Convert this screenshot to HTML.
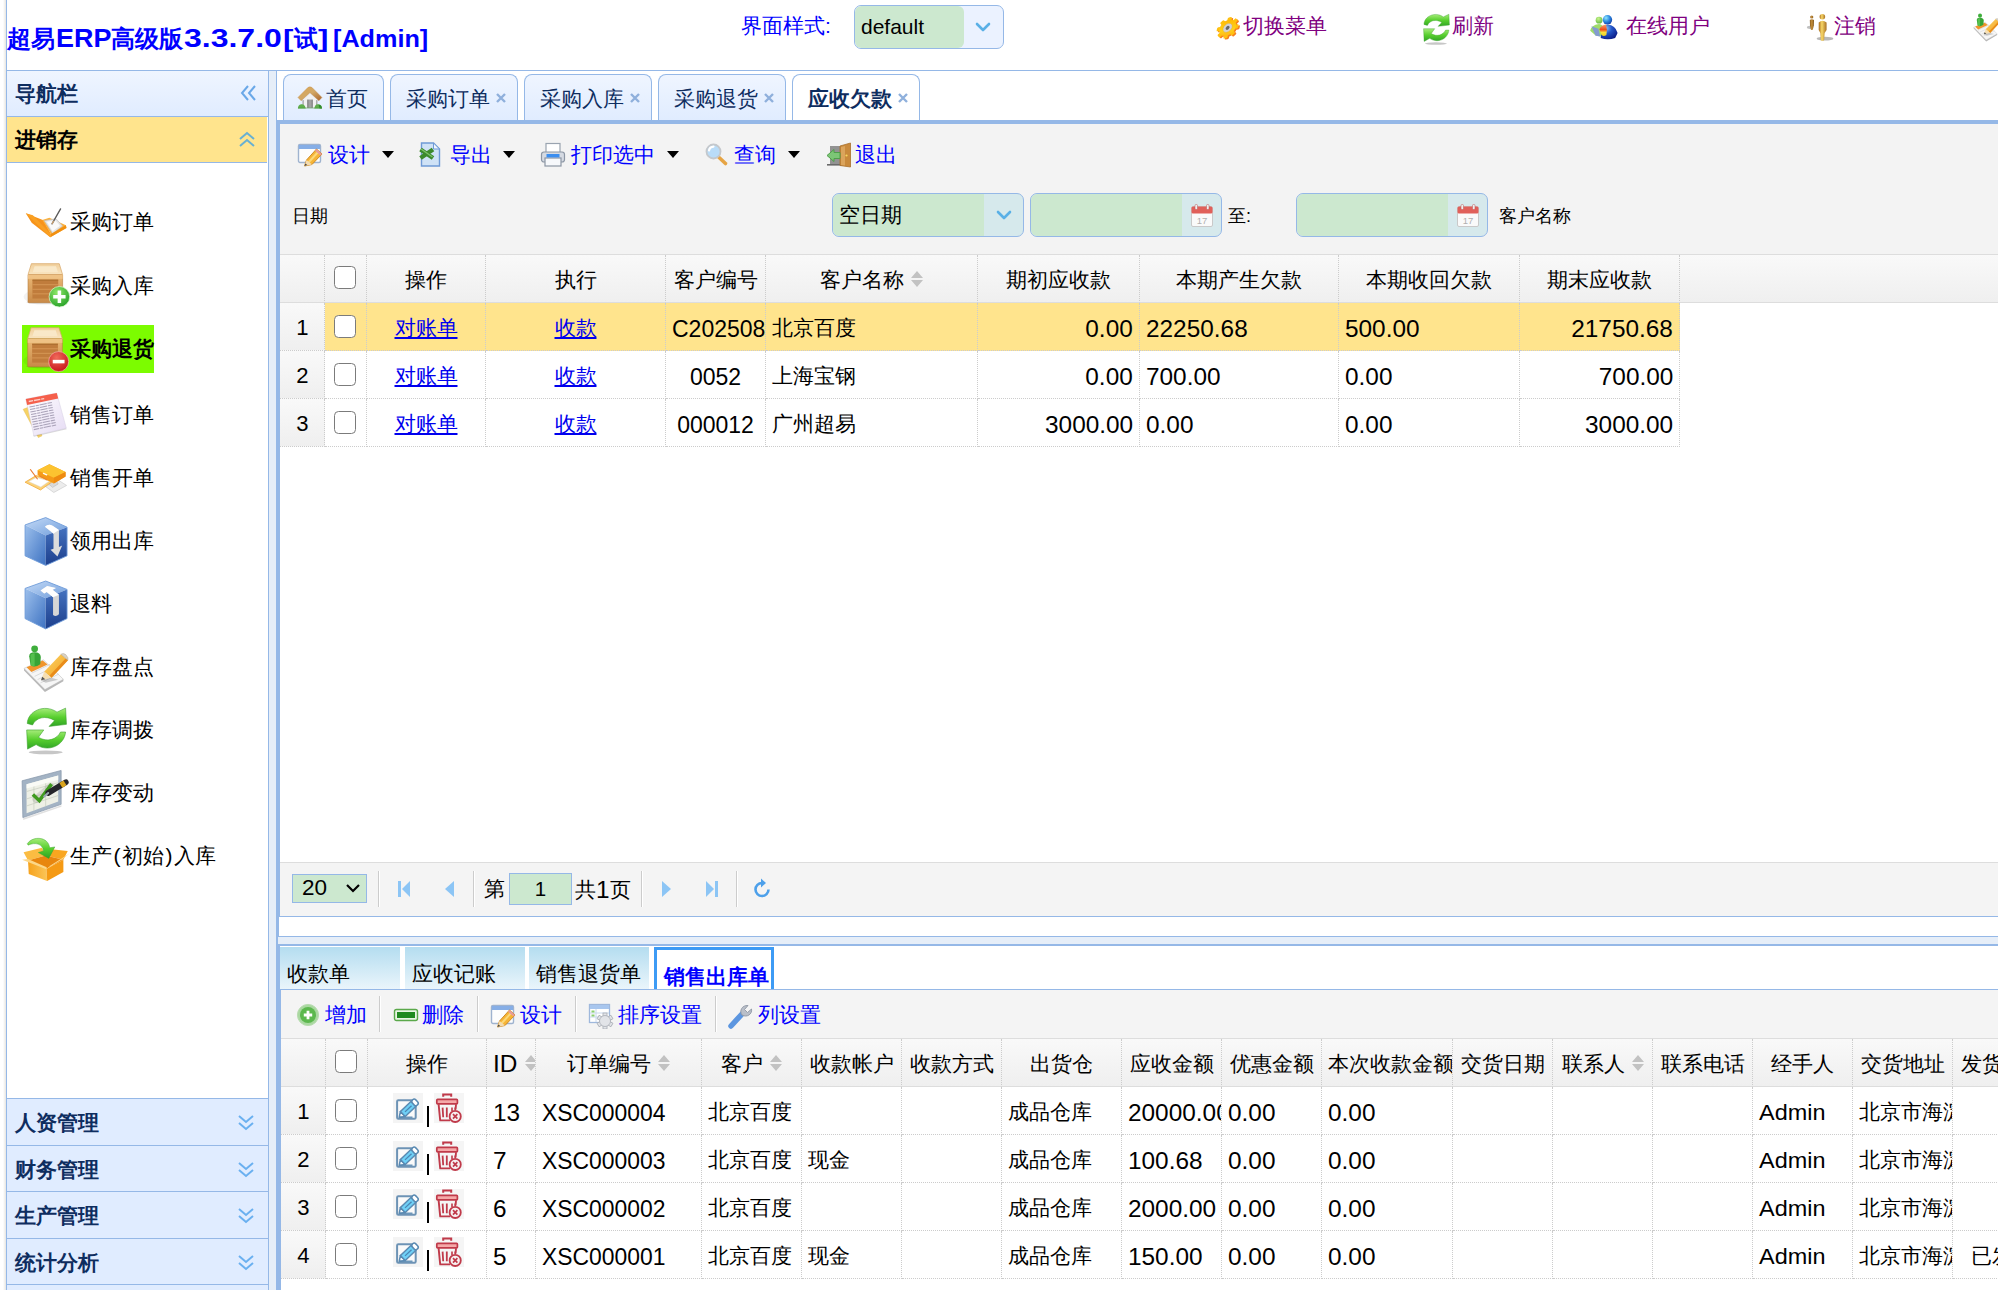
<!DOCTYPE html>
<html lang="zh">
<head>
<meta charset="utf-8">
<title>超易ERP</title>
<style>
html,body{margin:0;padding:0;width:1998px;height:1290px;overflow:hidden;}
#root{position:absolute;left:0;top:0;width:1998px;height:1290px;overflow:hidden;background:#fff;}
body{width:1998px;height:1290px;overflow:hidden;background:#fff;position:relative;
 font-family:"Liberation Sans",sans-serif;font-size:21px;color:#000;line-height:1;}
*{box-sizing:border-box;}
.abs{position:absolute;}
svg{display:block;}
/* ---------- top bar ---------- */
#vline{left:6px;top:0;width:1px;height:70px;background:#95b8e7;}
#vshade{left:3px;top:0;width:3px;height:1290px;background:linear-gradient(90deg,#fff,#e7e5e1);}
#hline{left:6px;top:70px;width:1992px;height:1px;background:#95b8e7;}
#title{left:7px;top:24px;font-size:24px;font-weight:bold;color:#0000ff;white-space:nowrap;line-height:28px;}
.toplbl{top:15px;color:#0000ff;font-size:21px;line-height:24px;white-space:nowrap;}
.toplink{top:15px;color:#800080;font-size:21px;line-height:24px;white-space:nowrap;}
#skin{left:854px;top:5px;width:150px;height:44px;border:1px solid #95b8e7;border-radius:7px;background:#ebf2ff;overflow:hidden;}
#skin .in{position:absolute;left:0;top:0;width:109px;height:42px;background:#cce8cf;border-radius:6px;padding:8px 0 0 6px;font-size:21px;line-height:26px;}
/* ---------- sidebar ---------- */
#side{left:6px;top:70px;width:263px;height:1220px;border:1px solid #95b8e7;background:#fff;border-bottom:none;}
.ph{position:absolute;left:0;width:261px;border-bottom:1px solid #95b8e7;background:#e0ecff;font-weight:bold;color:#0e2d5f;font-size:21px;}
.ph span{position:absolute;left:8px;top:10px;line-height:26px;}
.ph svg{position:absolute;}
#ph0{top:0;height:46px;background:linear-gradient(#eff5ff,#e0ecff);}
#ph1{top:46px;height:46px;background:#ffe48d;color:#000;width:260px;}
.mi{position:absolute;left:63px;font-size:21px;line-height:26px;white-space:nowrap;}
.ic{position:absolute;left:16px;width:46px;height:46px;}
#split{left:269px;top:71px;width:7px;height:1219px;background:#e6eef8;}
#lbar{left:276px;top:120px;width:4px;height:1170px;background:#95b8e7;}
/* ---------- tabs ---------- */
.tab{position:absolute;top:74px;height:47px;border:1px solid #95b8e7;border-bottom:none;border-radius:8px 8px 0 0;
 background:linear-gradient(#eff5ff,#e0ecff);font-size:21px;color:#0e2d5f;white-space:nowrap;}
.tab span{position:absolute;top:11px;line-height:26px;}
.tab .x{position:absolute;top:17px;width:12px;height:12px;}
.tab.sel{background:#fff;font-weight:bold;}
#tabline{left:277px;top:120px;width:1721px;height:4px;background:#95b8e7;}
#tbarea{left:280px;top:124px;width:1718px;height:131px;background:#f3f3f3;}
.tb{position:absolute;color:#0000ff;font-size:21px;line-height:26px;white-space:nowrap;}
.tbi{position:absolute;width:26px;height:26px;}
.dd{position:absolute;width:0;height:0;border-left:6px solid transparent;border-right:6px solid transparent;border-top:7px solid #000;}
.lbl{position:absolute;font-size:18px;line-height:22px;white-space:nowrap;}
.cb{position:absolute;height:44px;border:1px solid #95b8e7;border-radius:7px;background:#d6e9ec;overflow:hidden;}
.cb .in{position:absolute;left:0;top:0;height:42px;background:#cce8cf;border-radius:6px 0 0 6px;padding:8px 0 0 6px;font-size:21px;line-height:26px;}
/* ---------- grids ---------- */
table.g{position:absolute;border-collapse:separate;border-spacing:0;table-layout:fixed;font-size:21px;}
table.g td{height:48px;padding:3px 6px 0 6px;border-right:1px dotted #ccc;border-bottom:1px dotted #ccc;white-space:nowrap;overflow:hidden;vertical-align:middle;line-height:26px;}
table.g tr.h td{background:linear-gradient(#f9f9f9,#efefef);border-bottom:1px solid #ddd;text-align:center;height:48px;padding-top:2px;}
table.g td.rn{background:linear-gradient(#f9f9f9,#efefef);text-align:center;padding:0;}
table.g tr.h td.rn{background:linear-gradient(#f9f9f9,#efefef);}
table.g td.c{text-align:center;}
table.g td.r{text-align:right;}
table.g tr.s td{background:#ffe48d;}
table.g tr.s td.rn{background:linear-gradient(#f9f9f9,#efefef);}
table.g a{color:#0000ee;text-decoration:underline;}
.ck{display:inline-block;width:22px;height:23px;border:1.8px solid #7b7b7b;border-radius:4.5px;background:#fff;vertical-align:middle;position:relative;top:-3px;left:-1px;}
.n{display:inline-block;font-size:23px;transform:translateY(1px) scaleX(1.06);transform-origin:0 50%;}
td.r .n{transform-origin:100% 50%;}
td.c .n,td.rn .n,.cn .n{transform-origin:50% 50%;}
.f{font-size:20.5px;}
.srt{display:inline-block;width:12px;height:16px;vertical-align:0px;margin-left:7px;}
.hfill{position:absolute;background:linear-gradient(#f9f9f9,#efefef);border-bottom:1px solid #ddd;}
/* ---------- pager ---------- */
#pager{left:280px;top:862px;width:1718px;height:54px;background:#f4f4f4;border-top:1px solid #ddd;}
.psep{position:absolute;top:8px;width:2px;height:36px;border-left:1px solid #ccc;border-right:1px solid #fff;}
/* ---------- bottom panel ---------- */
.t2{position:absolute;top:947px;height:42px;width:120px;background:linear-gradient(#b4ddf0,#eaf5fb);font-size:21px;}
.t2 span{position:absolute;left:8px;top:14px;line-height:26px;white-space:nowrap;}
.ops{display:inline-block;white-space:nowrap;height:34px;vertical-align:middle;position:relative;top:-2px;left:1px;}
.ops svg{display:inline-block;vertical-align:top;}
.ops i{display:inline-block;width:2px;height:21px;background:#000;margin:13px 5px 0 4px;vertical-align:top;}
#title span{display:inline-block;vertical-align:baseline;height:28px;line-height:28px;}
#title span b{display:inline-block;transform-origin:0 50%;font-weight:bold;}
.n.a{transform:translateY(1px) scaleX(0.995);}
.n.b{transform:translateY(1px) scaleX(1.0);}
.n.d{font-size:21.5px;transform:translateY(0.5px) scaleX(1.09);}
.pp{display:inline-block;margin:0 1.5px;}
#lbar0{left:276px;top:71px;width:1px;height:50px;background:#95b8e7;}
#lbar2{left:280px;top:990px;width:1px;height:300px;background:#95b8e7;}
td.rn .n{font-size:22.5px;transform:translateY(1px) scaleX(0.98);}

</style>
</head>
<body>
<div id="root">
<div id="vshade" class="abs"></div><div id="vline" class="abs"></div><div id="hline" class="abs"></div>
<div id="title" class="abs">超易<span style="width:56px;font-size:26px"><b style="transform:scaleX(1.035);margin-left:1px">ERP</b></span>高级版<span style="width:98px;font-size:26px"><b style="transform:scaleX(1.23);margin-left:1px">3.3.7.0</b></span><span style="width:13px"><b style="transform:scaleX(1.3);margin-left:2px">[</b></span>试<span style="width:13px"><b style="transform:scaleX(1.3);margin-left:0px">]</b></span><span style="width:99px;font-size:24px"><b style="transform:scaleX(1.05);margin-left:2px">[Admin]</b></span></div>
<div class="abs toplbl" style="left:741px;top:14px;">界面样式:</div>
<div id="skin" class="abs"><div class="in">default</div><div class="abs " style="left:120px;top:13px;"><svg width="16" height="16" viewBox="0 0 16 16"><path d="M2 5 L8 11 L14 5" fill="none" stroke="#5ab0e6" stroke-width="2.6" stroke-linecap="round" stroke-linejoin="round"/></svg></div></div>
<div class="abs " style="left:1205px;top:5px;"><svg width="45" height="45" viewBox="0 0 1290 1290"><defs><linearGradient id="gg" x1="0" y1="0" x2="1" y2="1"><stop offset="0" stop-color="#ffb000"/><stop offset=".6" stop-color="#ffd21a"/><stop offset="1" stop-color="#ffa51a"/></linearGradient></defs><g transform="translate(648 655) rotate(47) scale(.64 .93)"><g transform="translate(75 -10)"><rect x="-75.0" y="-390" width="150" height="150" rx="40" fill="#f77f1e" transform="rotate(0)"/><rect x="-75.0" y="-390" width="150" height="150" rx="40" fill="#f77f1e" transform="rotate(45)"/><rect x="-75.0" y="-390" width="150" height="150" rx="40" fill="#f77f1e" transform="rotate(90)"/><rect x="-75.0" y="-390" width="150" height="150" rx="40" fill="#f77f1e" transform="rotate(135)"/><rect x="-75.0" y="-390" width="150" height="150" rx="40" fill="#f77f1e" transform="rotate(180)"/><rect x="-75.0" y="-390" width="150" height="150" rx="40" fill="#f77f1e" transform="rotate(225)"/><rect x="-75.0" y="-390" width="150" height="150" rx="40" fill="#f77f1e" transform="rotate(270)"/><rect x="-75.0" y="-390" width="150" height="150" rx="40" fill="#f77f1e" transform="rotate(315)"/><circle r="300" fill="#f77f1e"/></g><rect x="-75.0" y="-390" width="150" height="150" rx="40" fill="#ffc010" transform="rotate(0)"/><rect x="-75.0" y="-390" width="150" height="150" rx="40" fill="#ffc010" transform="rotate(45)"/><rect x="-75.0" y="-390" width="150" height="150" rx="40" fill="#ffc010" transform="rotate(90)"/><rect x="-75.0" y="-390" width="150" height="150" rx="40" fill="#ffc010" transform="rotate(135)"/><rect x="-75.0" y="-390" width="150" height="150" rx="40" fill="#ffc010" transform="rotate(180)"/><rect x="-75.0" y="-390" width="150" height="150" rx="40" fill="#ffc010" transform="rotate(225)"/><rect x="-75.0" y="-390" width="150" height="150" rx="40" fill="#ffc010" transform="rotate(270)"/><rect x="-75.0" y="-390" width="150" height="150" rx="40" fill="#ffc010" transform="rotate(315)"/><circle r="300" fill="url(#gg)"/><circle r="165" fill="#d2d2d8" stroke="#e8a810" stroke-width="14"/><circle r="70" fill="#666"/></g></svg></div>
<div class="abs toplink" style="left:1243px;top:14px;">切换菜单</div>
<div class="abs " style="left:1423.3px;top:12.5px;"><svg width="27.3" height="32.2" viewBox="80 925 285 330" preserveAspectRatio="none"><ellipse cx="215" cy="1238" rx="115" ry="13" fill="#000" opacity=".22"/><path d="M90 1042 C92 960 205 905 292 965 L350 938 L356 1048 L238 1062 L276 1022 C215 985 150 1000 126 1052 Z" fill="url(#grA)" stroke="#3aa02c" stroke-width="4" stroke-linejoin="round"/><path d="M350 1100 C342 1190 235 1242 150 1185 L92 1216 L86 1086 L202 1086 L166 1136 C225 1172 292 1150 316 1100 Z" fill="url(#grA)" stroke="#3aa02c" stroke-width="4" stroke-linejoin="round"/></svg></div>
<div class="abs toplink" style="left:1452px;top:14px;">刷新</div>
<div class="abs " style="left:1582px;top:5px;"><svg width="45" height="45" viewBox="0 0 1290 1290"><defs><radialGradient id="uB" cx=".35" cy=".3" r=".9"><stop offset="0" stop-color="#8fe8ff"/><stop offset=".45" stop-color="#2a86e0"/><stop offset="1" stop-color="#0a1e8c"/></radialGradient><radialGradient id="uB2" cx=".3" cy=".25" r=".9"><stop offset="0" stop-color="#8ac8f8"/><stop offset=".4" stop-color="#2456c8"/><stop offset="1" stop-color="#06107a"/></radialGradient><radialGradient id="uG" cx=".4" cy=".3" r=".9"><stop offset="0" stop-color="#c8f58a"/><stop offset="1" stop-color="#4aa830"/></radialGradient><linearGradient id="uF" x1="0" y1="0" x2="0" y2="1"><stop offset="0" stop-color="#f4a070"/><stop offset=".45" stop-color="#ee4a18"/><stop offset=".7" stop-color="#f8e040"/><stop offset="1" stop-color="#f0d020"/></linearGradient></defs><circle cx="490" cy="435" r="98" fill="url(#uG)"/><path d="M235 740 Q260 575 490 545 Q600 560 620 700 L560 900 L400 880 Z" fill="#9fdc6a"/><path d="M270 610 L470 680 L520 900 L390 880 Z" fill="#7f8fe0" opacity=".85"/><circle cx="730" cy="425" r="135" fill="url(#uB)"/><path d="M535 945 Q560 590 730 560 Q960 580 1020 800 L950 945 Q740 1025 535 945 Z" fill="url(#uB2)"/><path d="M500 690 Q560 570 690 560 Q730 700 700 860 Q600 920 545 840 Z" fill="url(#uF)"/></svg></div>
<div class="abs toplink" style="left:1626px;top:14px;">在线用户</div>
<div class="abs " style="left:1795px;top:5px;"><svg width="45" height="45" viewBox="0 0 1290 1290"><defs><linearGradient id="gd" x1="0" y1="0" x2="1" y2="0"><stop offset="0" stop-color="#a86a1c"/><stop offset=".4" stop-color="#f8d868"/><stop offset="1" stop-color="#a87024"/></linearGradient><linearGradient id="gd2" x1="0" y1="0" x2="1" y2="0"><stop offset="0" stop-color="#8a5a1c"/><stop offset=".5" stop-color="#c8923c"/><stop offset="1" stop-color="#7a5018"/></linearGradient></defs><ellipse cx="860" cy="965" rx="240" ry="55" fill="#000" opacity=".28"/><ellipse cx="430" cy="640" rx="90" ry="45" fill="#000" opacity=".25"/><circle cx="480" cy="345" r="45" fill="url(#gd2)"/><path d="M425 430 Q480 390 545 430 L540 590 L510 700 Q480 730 455 700 L430 590 Z" fill="url(#gd2)"/><circle cx="785" cy="338" r="80" fill="url(#gd)"/><path d="M680 500 Q785 400 905 500 L905 720 L850 800 L835 1010 Q785 1040 740 1010 L725 800 L680 720 Z" fill="url(#gd)"/></svg></div>
<div class="abs toplink" style="left:1834px;top:14px;">注销</div>
<div class="abs " style="left:1972.5px;top:13.3px;"><svg width="27.7" height="29" viewBox="60 505 315 330" preserveAspectRatio="none"><path d="M68 668 L200 610 L335 742 L210 812 Z" fill="#f6f6f6" stroke="#c2c2c2" stroke-width="4"/><path d="M68 668 L210 812 L335 742 L335 756 L210 828 L68 682 Z" fill="#b8b8b8"/><path d="M120 700 L245 640 M140 722 L265 662 M160 744 L285 684 M180 766 L305 706" stroke="#cfcfcf" stroke-width="5"/><path d="M85 660 L195 615 L228 642 L118 692 Z" fill="#f0952c"/><circle cx="140" cy="535" r="23" fill="#3fae3c"/><path d="M103 585 Q103 558 140 558 Q180 558 182 590 L178 640 Q140 668 112 645 Z" fill="#37a436"/><path d="M112 575 Q125 562 140 565 L140 655 Q122 655 114 645 Z" fill="#55c04e"/><path d="M205 690 L318 572 L366 612 L255 732 Z" fill="url(#pen)"/><path d="M222 672 L335 556" stroke="#fde08a" stroke-width="0"/><path d="M240 718 L352 600 L366 612 L255 732 Z" fill="#e98c1a"/><path d="M318 572 Q335 560 352 575 L366 596 L366 612 Z" fill="#d9d2c4" stroke="#a8a090" stroke-width="3"/><path d="M183 748 L205 690 L255 732 Z" fill="#f6dfb2"/><path d="M183 748 L192 724 L212 741 Z" fill="#555"/><path d="M183 748 L255 732 L300 745 L215 765 Z" fill="#000" opacity=".18"/></svg></div>
<div id="side" class="abs"><div class="ph" id="ph0"><span>导航栏</span><div class="abs " style="left:233px;top:13px;"><svg width="18" height="18" viewBox="0 0 18 18"><path d="M8 2 L2 9 L8 16 M15 2 L9 9 L15 16" fill="none" stroke="#6aa8e8" stroke-width="2"/></svg></div></div><div class="ph" id="ph1"><span>进销存</span><div class="abs " style="left:231px;top:14px;"><svg width="18" height="18" viewBox="0 0 18 18"><path d="M2 8 L9 2 L16 8 M2 15 L9 9 L16 15" fill="none" stroke="#68b0d2" stroke-width="2"/></svg></div></div><div class="abs" style="left:15px;top:254px;width:132px;height:48px;background:#7cfc00"></div><svg class="abs" style="left:7px;top:119px" width="70" height="190" viewBox="0 0 475 1290"><defs><linearGradient id="wdF" x1="0" y1="0" x2="0" y2="1"><stop offset="0" stop-color="#eab876"/><stop offset="1" stop-color="#c98a48"/></linearGradient><linearGradient id="wdT" x1="0" y1="0" x2="0" y2="1"><stop offset="0" stop-color="#f1cf9b"/><stop offset="1" stop-color="#f8e4c0"/></linearGradient><radialGradient id="gP" cx=".4" cy=".3" r=".8"><stop offset="0" stop-color="#8fe868"/><stop offset="1" stop-color="#1c9a22"/></radialGradient><radialGradient id="gM" cx=".4" cy=".3" r=".8"><stop offset="0" stop-color="#f06a5a"/><stop offset="1" stop-color="#c40d14"/></radialGradient><linearGradient id="pap" x1="0" y1="0" x2="1" y2="1"><stop offset="0" stop-color="#ffffff"/><stop offset="1" stop-color="#e6dcf4"/></linearGradient><linearGradient id="cbL" x1="0" y1="0" x2="1" y2="1"><stop offset="0" stop-color="#9dc0ec"/><stop offset="1" stop-color="#3d72c2"/></linearGradient><linearGradient id="cbR" x1="0" y1="0" x2="0" y2="1"><stop offset="0" stop-color="#4472c0"/><stop offset="1" stop-color="#1d3f8c"/></linearGradient><linearGradient id="cbT" x1="0" y1="0" x2="1" y2="1"><stop offset="0" stop-color="#c4daf6"/><stop offset="1" stop-color="#6f9ddc"/></linearGradient><linearGradient id="grA" x1="0" y1="0" x2="0" y2="1"><stop offset="0" stop-color="#a6ec7a"/><stop offset=".5" stop-color="#58cf2e"/><stop offset="1" stop-color="#2fa325"/></linearGradient><linearGradient id="bxL" x1="0" y1="0" x2="1" y2="0"><stop offset="0" stop-color="#f6a21c"/><stop offset="1" stop-color="#fbc558"/></linearGradient><linearGradient id="pen" x1="0" y1="0" x2="1" y2="1"><stop offset="0" stop-color="#fbd468"/><stop offset="1" stop-color="#f3a01c"/></linearGradient></defs><path d="M80 158 L200 205 L250 298 L246 320 L120 222 Z" fill="#f7931a"/><path d="M80 158 L128 172 L250 300 L246 320 Z" fill="#f9a023"/><path d="M192 203 L240 188 L352 240 L356 258 L246 320 L250 298 Z" fill="#fbb03a"/><path d="M205 208 L285 195 L330 245 L262 296 Z" fill="#e4e4e4" stroke="#bdbdbd" stroke-width="4"/><path d="M222 215 L280 205 L312 243 L262 280 Z" fill="#fafafa"/><path d="M246 320 L356 258 L352 240 L250 298 Z" fill="#f18f10"/><path d="M258 230 L316 128" stroke="#5a5a5a" stroke-width="9" stroke-linecap="round"/><path d="M258 230 L270 209" stroke="#c9a070" stroke-width="9"/><g transform="translate(95 500)"><ellipse cx="40" cy="225" rx="70" ry="40" fill="#000" opacity=".05"/><ellipse cx="110" cy="262" rx="120" ry="14" fill="#000" opacity=".12"/><path d="M23 0 L212 0 L235 75 L0 75 Z" fill="url(#wdT)" stroke="#d9a868" stroke-width="5"/><path d="M45 18 L190 18 L203 58 L32 58 Z" fill="#f9e8c8"/><rect x="0" y="75" width="235" height="190" rx="6" fill="url(#wdF)" stroke="#b67c3c" stroke-width="4"/><rect x="0" y="75" width="235" height="28" fill="#efc285"/><rect x="30" y="112" width="175" height="125" fill="#c07c3c"/><path d="M30 143 h175 M30 174 h175 M30 205 h175" stroke="#d89a58" stroke-width="6"/><path d="M30 112 h175" stroke="#a86a2c" stroke-width="8"/><circle cx="213" cy="225" r="70" fill="url(#gP)" stroke="#d8f5cc" stroke-width="5"/><path d="M213 183 V267 M171 225 H255" stroke="#fff" stroke-width="24"/></g><g transform="translate(93 935)"><ellipse cx="40" cy="225" rx="70" ry="40" fill="#000" opacity=".05"/><ellipse cx="110" cy="262" rx="120" ry="14" fill="#000" opacity=".12"/><path d="M23 0 L212 0 L235 75 L0 75 Z" fill="url(#wdT)" stroke="#d9a868" stroke-width="5"/><path d="M45 18 L190 18 L203 58 L32 58 Z" fill="#f9e8c8"/><rect x="0" y="75" width="235" height="190" rx="6" fill="url(#wdF)" stroke="#b67c3c" stroke-width="4"/><rect x="0" y="75" width="235" height="28" fill="#efc285"/><rect x="30" y="112" width="175" height="125" fill="#c07c3c"/><path d="M30 143 h175 M30 174 h175 M30 205 h175" stroke="#d89a58" stroke-width="6"/><path d="M30 112 h175" stroke="#a86a2c" stroke-width="8"/><circle cx="210" cy="230" r="68" fill="url(#gM)" stroke="#f8c0c0" stroke-width="4"/><path d="M170 230 H250" stroke="#fff" stroke-width="24"/></g></svg><svg class="abs" style="left:7px;top:314px" width="70" height="190" viewBox="0 0 475 1290"><path d="M62 165 L100 150 L190 345 L165 357 Z" fill="#f6d264" stroke="#e2b94a" stroke-width="3"/><path d="M135 352 L358 300 L352 290 L130 340 Z" fill="#000" opacity=".15"/><path d="M80 95 L290 55 L355 293 L135 345 Z" fill="url(#pap)" stroke="#d2cadf" stroke-width="3"/><path d="M80 95 L290 55 L300 92 L89 135 Z" fill="#f5604c"/><path d="M100 112 L205 92" stroke="#fbd0c8" stroke-width="9" stroke-dasharray="30 6 44 6"/><path d="M105 150 L283 113" stroke="#a9a2b8" stroke-width="7" stroke-dasharray="38 5 22 4 50 6 30 200"/><path d="M108 167 L286 130" stroke="#a9a2b8" stroke-width="7" stroke-dasharray="38 5 22 4 50 6 30 200"/><path d="M111 184 L289 147" stroke="#a9a2b8" stroke-width="7" stroke-dasharray="38 5 22 4 50 6 30 200"/><path d="M115 201 L293 164" stroke="#a9a2b8" stroke-width="7" stroke-dasharray="38 5 22 4 50 6 30 200"/><path d="M118 218 L296 181" stroke="#a9a2b8" stroke-width="7" stroke-dasharray="38 5 22 4 50 6 30 200"/><path d="M121 235 L299 198" stroke="#a9a2b8" stroke-width="7" stroke-dasharray="38 5 22 4 50 6 30 200"/><path d="M124 252 L302 215" stroke="#a9a2b8" stroke-width="7" stroke-dasharray="38 5 22 4 50 6 30 200"/><path d="M127 269 L305 232" stroke="#a9a2b8" stroke-width="7" stroke-dasharray="38 5 22 4 50 6 30 200"/><path d="M131 286 L309 249" stroke="#a9a2b8" stroke-width="7" stroke-dasharray="38 5 22 4 50 6 30 200"/><path d="M134 303 L312 266" stroke="#a9a2b8" stroke-width="7" stroke-dasharray="38 5 22 4 50 6 30 200"/><path d="M215 690 L300 645 L357 682 L270 730 Z" fill="#ececec" stroke="#c4c4c4" stroke-width="4"/><path d="M235 672 L285 650 L300 672 L262 695 Z" fill="#d9d9d9" stroke="#aaa" stroke-width="3"/><path d="M75 660 L150 615 L268 650 L180 713 Z" fill="#fbd27a" stroke="#f2a52c" stroke-width="5"/><path d="M100 656 L152 628 L240 652 L182 692 Z" fill="#fff" stroke="#d8d8d8" stroke-width="3"/><path d="M160 578 L240 538 L350 590 L350 622 L270 668 L160 612 Z" fill="#f59a18"/><path d="M160 578 L240 538 L350 590 L270 630 Z" fill="#fcc330"/><path d="M270 630 L350 590 L350 622 L270 668 Z" fill="#ee8a10"/><path d="M200 600 L222 610" stroke="#fff" stroke-width="9" stroke-linecap="round"/><path d="M110 572 L160 640" stroke="#ea7a2e" stroke-width="8"/><path d="M172 617 L226 646" stroke="#ea7a2e" stroke-width="7"/><path d="M75 950 L215 900 L360 965 L215 1022 Z" fill="url(#cbT)"/><path d="M75 950 L215 1022 L215 1225 L75 1160 Z" fill="url(#cbL)"/><path d="M215 1022 L360 965 L360 1160 L215 1225 Z" fill="url(#cbR)"/><path d="M75 950 L215 900 L360 965 L360 1160 L215 1225 L75 1160 Z" fill="none" stroke="#6d9ad8" stroke-width="6" stroke-linejoin="round"/><path d="M210 962 Q232 940 262 955 L305 985 L305 1100 L327 1090 L295 1165 L248 1118 L268 1112 L268 1012 Q240 985 210 962 Z" fill="#dcdcdc"/><path d="M210 962 Q232 940 262 955 L305 985 L268 1008 Q240 985 210 962 Z" fill="#ffffff"/></svg><svg class="abs" style="left:7px;top:499px" width="70" height="190" viewBox="0 0 475 1290"><path d="M75 125 L215 75 L360 132 L215 192 Z" fill="url(#cbT)"/><path d="M75 125 L215 192 L215 400 L75 330 Z" fill="url(#cbL)"/><path d="M215 192 L360 132 L360 330 L215 400 Z" fill="url(#cbR)"/><path d="M75 125 L215 75 L360 132 L360 330 L215 400 L75 330 Z" fill="none" stroke="#6d9ad8" stroke-width="6" stroke-linejoin="round"/><path d="M180 140 L225 108 L285 122 L262 134 L305 168 L305 300 Q285 322 265 305 L265 185 L222 150 L205 160 Z" fill="#d6d6d6"/><path d="M180 140 L225 108 L285 122 L262 134 L305 168 L265 185 L222 150 L205 160 Z" fill="#ffffff"/><path d="M68 668 L200 610 L335 742 L210 812 Z" fill="#f6f6f6" stroke="#c2c2c2" stroke-width="4"/><path d="M68 668 L210 812 L335 742 L335 756 L210 828 L68 682 Z" fill="#b8b8b8"/><path d="M120 700 L245 640 M140 722 L265 662 M160 744 L285 684 M180 766 L305 706" stroke="#cfcfcf" stroke-width="5"/><path d="M85 660 L195 615 L228 642 L118 692 Z" fill="#f0952c"/><circle cx="140" cy="535" r="23" fill="#3fae3c"/><path d="M103 585 Q103 558 140 558 Q180 558 182 590 L178 640 Q140 668 112 645 Z" fill="#37a436"/><path d="M112 575 Q125 562 140 565 L140 655 Q122 655 114 645 Z" fill="#55c04e"/><path d="M205 690 L318 572 L366 612 L255 732 Z" fill="url(#pen)"/><path d="M222 672 L335 556" stroke="#fde08a" stroke-width="0"/><path d="M240 718 L352 600 L366 612 L255 732 Z" fill="#e98c1a"/><path d="M318 572 Q335 560 352 575 L366 596 L366 612 Z" fill="#d9d2c4" stroke="#a8a090" stroke-width="3"/><path d="M183 748 L205 690 L255 732 Z" fill="#f6dfb2"/><path d="M183 748 L192 724 L212 741 Z" fill="#555"/><path d="M183 748 L255 732 L300 745 L215 765 Z" fill="#000" opacity=".18"/><ellipse cx="215" cy="1238" rx="115" ry="13" fill="#000" opacity=".22"/><path d="M90 1042 C92 960 205 905 292 965 L350 938 L356 1048 L238 1062 L276 1022 C215 985 150 1000 126 1052 Z" fill="url(#grA)" stroke="#3aa02c" stroke-width="4" stroke-linejoin="round"/><path d="M350 1100 C342 1190 235 1242 150 1185 L92 1216 L86 1086 L202 1086 L166 1136 C225 1172 292 1150 316 1100 Z" fill="url(#grA)" stroke="#3aa02c" stroke-width="4" stroke-linejoin="round"/></svg><svg class="abs" style="left:7px;top:684px" width="70" height="190" viewBox="0 0 475 1290"><path d="M62 430 L322 342 L322 352 L62 442 Z" fill="#000" opacity=".12"/><path d="M55 175 L320 105 L320 335 L60 425 Z" fill="#a3b3c4" stroke="#8798aa" stroke-width="5" stroke-linejoin="round"/><path d="M85 198 L300 140 L300 315 L85 395 Z" fill="#eef0e6"/><path d="M85 248 L300 188 M85 298 L300 232 M85 346 L300 275 M135 185 V378 M215 163 V348" stroke="#c8cec0" stroke-width="5"/><path d="M85 198 L300 140 L300 168 L85 228 Z" fill="#fafbf6"/><path d="M150 300 L250 215" stroke="#000" stroke-width="50" opacity=".10" stroke-linecap="round"/><path d="M128 268 L172 310 L255 198" fill="none" stroke="#3f9a1f" stroke-width="24" stroke-linejoin="miter"/><path d="M232 258 L352 185" stroke="#26262a" stroke-width="38" stroke-linecap="round"/><path d="M318 206 L346 189" stroke="#dba51e" stroke-width="38"/><path d="M205 282 L232 258" stroke="#9aa6b4" stroke-width="14" stroke-linecap="round"/><path d="M65 660 L190 630 L215 682 L95 716 Z" fill="#fbbc42"/><path d="M215 682 L252 640 L365 652 L335 712 Z" fill="#f9a620"/><path d="M95 716 L215 682 L335 712 L220 772 Z" fill="#e8860e"/><path d="M95 716 L220 772 L225 855 L100 808 Z" fill="url(#bxL)"/><path d="M220 772 L335 712 L335 795 L225 855 Z" fill="#f59a14"/><path d="M55 712 L95 706 L222 762 L220 775 Z" fill="#fcd788"/><path d="M220 775 L335 702 L376 668 L250 748 Z" fill="#fcd788"/><path d="M90 602 C128 548 232 552 242 630 L277 624 L236 702 L165 662 L200 652 C196 602 142 590 96 612 Z" fill="url(#grA)" stroke="#3aa02c" stroke-width="3" stroke-linejoin="round"/></svg><div class="mi" style="top:138.39999999999998px">采购订单</div><div class="mi" style="top:202.09999999999997px">采购入库</div><div class="mi" style="top:264.9px;font-weight:bold">采购退货</div><div class="mi" style="top:331.3px">销售订单</div><div class="mi" style="top:393.9px">销售开单</div><div class="mi" style="top:456.90000000000003px">领用出库</div><div class="mi" style="top:520.2px">退料</div><div class="mi" style="top:583.2px">库存盘点</div><div class="mi" style="top:646.2px">库存调拨</div><div class="mi" style="top:709.2px">库存变动</div><div class="mi" style="top:772.2px">生产<span class="pp">(</span>初始<span class="pp">)</span>入库</div><div class="abs" style="left:0;top:1027px;width:261px;height:1px;background:#95b8e7"></div><div class="ph" style="top:1028px;height:47px"><span style="top:11px">人资管理</span><div class="abs " style="left:230px;top:14px;"><svg width="18" height="18" viewBox="0 0 18 18"><path d="M2 3 L9 9 L16 3 M2 10 L9 16 L16 10" fill="none" stroke="#6ab0f0" stroke-width="2"/></svg></div></div><div class="ph" style="top:1075px;height:46px"><span style="top:11px">财务管理</span><div class="abs " style="left:230px;top:14px;"><svg width="18" height="18" viewBox="0 0 18 18"><path d="M2 3 L9 9 L16 3 M2 10 L9 16 L16 10" fill="none" stroke="#6ab0f0" stroke-width="2"/></svg></div></div><div class="ph" style="top:1121px;height:47px"><span style="top:11px">生产管理</span><div class="abs " style="left:230px;top:14px;"><svg width="18" height="18" viewBox="0 0 18 18"><path d="M2 3 L9 9 L16 3 M2 10 L9 16 L16 10" fill="none" stroke="#6ab0f0" stroke-width="2"/></svg></div></div><div class="ph" style="top:1168px;height:46px"><span style="top:11px">统计分析</span><div class="abs " style="left:230px;top:14px;"><svg width="18" height="18" viewBox="0 0 18 18"><path d="M2 3 L9 9 L16 3 M2 10 L9 16 L16 10" fill="none" stroke="#6ab0f0" stroke-width="2"/></svg></div></div><div class="ph" style="top:1214px;height:7px"><span style="top:11px"></span></div></div>
<div id="split" class="abs"></div><div id="lbar" class="abs"></div><div id="lbar0" class="abs"></div>
<div class="tab" style="left:283px;width:101px"><div class="abs " style="left:6px;top:5px;"><svg width="50" height="36" viewBox="0 0 1792 1290"><defs><linearGradient id="rf" x1="0" y1="0" x2="1" y2="1"><stop offset="0" stop-color="#dba653"/><stop offset=".5" stop-color="#d2a866"/><stop offset="1" stop-color="#a8622a"/></linearGradient><linearGradient id="dr" x1="0" y1="0" x2="1" y2="0"><stop offset="0" stop-color="#7e7e7e"/><stop offset=".5" stop-color="#aaaaaa"/><stop offset="1" stop-color="#808080"/></linearGradient></defs><path d="M445 720 H985 V1000 H445 Z" fill="#a9a9a9"/><path d="M495 700 L715 480 L935 700 V1000 H495 Z" fill="#f1f1f1"/><rect x="615" y="700" width="205" height="300" fill="url(#dr)"/><path d="M285 625 L640 270 Q715 215 790 270 L1145 625 L1035 745 L715 455 L400 745 Z" fill="url(#rf)" stroke="#c08a48" stroke-width="14" stroke-linejoin="round"/><path d="M285 1020 Q280 900 400 870 Q520 850 560 1000 L560 1020 Z" fill="#5fae4c"/><path d="M870 1020 Q900 850 1020 870 Q1150 900 1145 1020 Z" fill="#5fae4c"/><path d="M1020 880 Q1150 900 1145 1020 L1060 1020 Z" fill="#2f8a2c"/><rect x="285" y="985" width="860" height="38" fill="#4c9a3e" opacity=".55"/></svg></div><span style="left:42px">首页</span></div>
<div class="tab" style="left:390px;width:128px"><span style="left:15px">采购订单</span><div class="x" style="left:104px"><svg width="12" height="12" viewBox="0 0 12 12"><path d="M2 2 L10 10 M10 2 L2 10" stroke="#8fb0dc" stroke-width="2.4"/></svg></div></div>
<div class="tab" style="left:524px;width:128px"><span style="left:15px">采购入库</span><div class="x" style="left:104px"><svg width="12" height="12" viewBox="0 0 12 12"><path d="M2 2 L10 10 M10 2 L2 10" stroke="#8fb0dc" stroke-width="2.4"/></svg></div></div>
<div class="tab" style="left:658px;width:128px"><span style="left:15px">采购退货</span><div class="x" style="left:104px"><svg width="12" height="12" viewBox="0 0 12 12"><path d="M2 2 L10 10 M10 2 L2 10" stroke="#8fb0dc" stroke-width="2.4"/></svg></div></div>
<div class="tab sel" style="left:792px;width:128px"><span style="left:15px">应收欠款</span><div class="x" style="left:104px"><svg width="12" height="12" viewBox="0 0 12 12"><path d="M2 2 L10 10 M10 2 L2 10" stroke="#8fb0dc" stroke-width="2.4"/></svg></div></div>
<div id="tabline" class="abs"></div>
<div id="tbarea" class="abs"><div class="abs " style="left:17px;top:18px;"><svg width="26" height="26" viewBox="0 0 26 26"><rect x="1.5" y="2.5" width="22" height="18" rx="1.5" fill="#fdfdfd" stroke="#9fb3cf" stroke-width="1.4"/><rect x="2" y="3" width="21" height="4" fill="#86aee6"/><path d="M7.5 24 L9.5 18 L19.5 7 L25 12 L15 22.5 Z" fill="#f6b436" stroke="#c98318" stroke-width=".9"/><path d="M11.5 20.5 L21.5 9.5" stroke="#fbd878" stroke-width="2"/><path d="M7.5 24 L9.5 18 L15 22.5 Z" fill="#f3dbb0"/><path d="M7.5 24 l.9 -2.6 l1.8 1.7 z" fill="#444"/><path d="M18 8.7 L23.5 13.6 L25 12 L19.5 7 Z" fill="#e79b9b"/></svg></div><div class="tb" style="left:48px;top:18px">设计</div><div class="dd" style="left:102px;top:27px"></div><div class="abs " style="left:138px;top:18px;"><svg width="26" height="26" viewBox="0 0 26 26"><path d="M3.5 1 H15.5 L21.5 7 V24 H3.5 Z" fill="#cfe2f6" stroke="#6f9ad6" stroke-width="1.4"/><path d="M15.5 1 V7 H21.5 Z" fill="#eef5fd" stroke="#6f9ad6" stroke-width="1"/><path d="M2.5 7.5 L15 16 M15 7.5 L2.5 16" stroke="#3c8a2c" stroke-width="4.4"/><path d="M3 7 L14.5 15" stroke="#7cc06a" stroke-width="1.4"/></svg></div><div class="tb" style="left:170px;top:18px">导出</div><div class="dd" style="left:223px;top:27px"></div><div class="abs " style="left:260px;top:18px;"><svg width="26" height="26" viewBox="0 0 26 26"><rect x="6" y="1.5" width="14" height="10" fill="#fff" stroke="#9aa4b0" stroke-width="1.2"/><rect x="1.5" y="10" width="23" height="10" rx="2.5" fill="#d5dae2" stroke="#8c96a4" stroke-width="1.2"/><rect x="5" y="16" width="16" height="8" fill="#f6f8fb" stroke="#8c96a4" stroke-width="1.2"/><rect x="6.5" y="12" width="13" height="3.4" fill="#3b8ef0"/></svg></div><div class="tb" style="left:291px;top:18px">打印选中</div><div class="dd" style="left:387px;top:27px"></div><div class="abs " style="left:424px;top:18px;"><svg width="26" height="26" viewBox="0 0 26 26"><path d="M14 14.5 L21.5 21.5" stroke="#e6a444" stroke-width="3.6" stroke-linecap="round"/><circle cx="9.5" cy="9.5" r="7" fill="#b9dcf8" stroke="#c4c8cc" stroke-width="1.8"/><path d="M5 8.5 A4.8 4.8 0 0 1 9.5 4.6" stroke="#fff" stroke-width="2.2" fill="none" stroke-linecap="round"/></svg></div><div class="tb" style="left:454px;top:18px">查询</div><div class="dd" style="left:508px;top:27px"></div><div class="abs " style="left:546px;top:18px;"><svg width="26" height="26" viewBox="0 0 26 26"><rect x="4" y="4" width="12" height="19" fill="#929292"/><rect x="1" y="22" width="16" height="1.6" fill="#6a6a6a"/><path d="M14 4 L24.5 1 V25 L14 23.5 Z" fill="#c98a3c" stroke="#a8702c" stroke-width=".8"/><path d="M15 5 L19 4 V23.5 L15 23 Z" fill="#dba45c"/><circle cx="20.5" cy="13.5" r="1.1" fill="#f7d860"/><path d="M1 13.5 L8 7.5 V10.5 H14 V16.5 H8 V19.5 Z" fill="#7cc676" stroke="#4f9e4a" stroke-width="1"/></svg></div><div class="tb" style="left:575px;top:18px">退出</div><div class="lbl" style="left:12px;top:81px">日期</div><div class="cb" style="left:552px;top:69px;width:192px"><div class="in" style="width:151px">空日期</div><div class="abs " style="left:163px;top:13px;"><svg width="16" height="16" viewBox="0 0 16 16"><path d="M2 5 L8 11 L14 5" fill="none" stroke="#5ab0e6" stroke-width="2.6" stroke-linecap="round" stroke-linejoin="round"/></svg></div></div><div class="cb" style="left:750px;top:69px;width:192px"><div class="in" style="width:151px"></div><div class="abs " style="left:158px;top:9px;"><svg width="26" height="26" viewBox="0 0 26 26"><rect x="2.5" y="3.5" width="21" height="20" rx="1.5" fill="#fafafa" stroke="#c9c9c9" stroke-width="1"/><rect x="2.5" y="3.5" width="21" height="7" rx="1.5" fill="#e0605a"/><rect x="6" y="1.5" width="2.5" height="5" rx="1" fill="#eee" stroke="#b55" stroke-width=".5"/><rect x="17.5" y="1.5" width="2.5" height="5" rx="1" fill="#eee" stroke="#b55" stroke-width=".5"/><text x="13" y="20.5" font-family="Liberation Sans" font-size="9.5" fill="#b0b0b0" text-anchor="middle">17</text></svg></div></div><div class="lbl" style="left:948px;top:81px">至:</div><div class="cb" style="left:1016px;top:69px;width:192px"><div class="in" style="width:151px"></div><div class="abs " style="left:158px;top:9px;"><svg width="26" height="26" viewBox="0 0 26 26"><rect x="2.5" y="3.5" width="21" height="20" rx="1.5" fill="#fafafa" stroke="#c9c9c9" stroke-width="1"/><rect x="2.5" y="3.5" width="21" height="7" rx="1.5" fill="#e0605a"/><rect x="6" y="1.5" width="2.5" height="5" rx="1" fill="#eee" stroke="#b55" stroke-width=".5"/><rect x="17.5" y="1.5" width="2.5" height="5" rx="1" fill="#eee" stroke="#b55" stroke-width=".5"/><text x="13" y="20.5" font-family="Liberation Sans" font-size="9.5" fill="#b0b0b0" text-anchor="middle">17</text></svg></div></div><div class="lbl" style="left:1219px;top:81px">客户名称</div></div>
<div class="abs" style="left:280px;top:254px;width:1718px;height:1px;background:#ddd"></div>
<div class="abs hfill" style="left:280px;top:255px;width:1718px;height:48px"></div>
<table class="g" style="left:280px;top:255px;width:1400px"><colgroup><col style="width:45px"><col style="width:42px"><col style="width:119px"><col style="width:180px"><col style="width:100px"><col style="width:212px"><col style="width:162px"><col style="width:199px"><col style="width:181px"><col style="width:160px"></colgroup><tr class="h"><td class=rn></td><td class=c><span class="ck"></span></td><td>操作</td><td>执行</td><td>客户编号</td><td>客户名称<span class="srt"><svg width="12" height="16" viewBox="0 0 12 16"><path d="M6 0 L12 7 H0 Z M6 16 L12 9 H0 Z" fill="#c2c2c2"/></svg></span></td><td>期初应收款</td><td>本期产生欠款</td><td>本期收回欠款</td><td>期末应收款</td></tr><tr class=s><td class=rn><span class="n">1</span></td><td class=c><span class="ck"></span></td><td class=c><a>对账单</a></td><td class=c><a>收款</a></td><td class=c><span class="n b">C202508</span></td><td>北京百度</td><td class=r><span class="n">0.00</span></td><td><span class="n">22250.68</span></td><td><span class="n">500.00</span></td><td class=r><span class="n">21750.68</span></td></tr><tr><td class=rn><span class="n">2</span></td><td class=c><span class="ck"></span></td><td class=c><a>对账单</a></td><td class=c><a>收款</a></td><td class=c><span class="n b">0052</span></td><td>上海宝钢</td><td class=r><span class="n">0.00</span></td><td><span class="n">700.00</span></td><td><span class="n">0.00</span></td><td class=r><span class="n">700.00</span></td></tr><tr><td class=rn><span class="n">3</span></td><td class=c><span class="ck"></span></td><td class=c><a>对账单</a></td><td class=c><a>收款</a></td><td class=c><span class="n b">000012</span></td><td>广州超易</td><td class=r><span class="n">3000.00</span></td><td><span class="n">0.00</span></td><td><span class="n">0.00</span></td><td class=r><span class="n">3000.00</span></td></tr></table>
<div id="pager" class="abs"><div class="abs" style="left:12px;top:11px;width:75px;height:29px;border:1px solid #95b8e7;background:#cce8cf;"><span class="abs" style="left:9px;top:1px;line-height:24px;font-size:22.5px">20</span><div class="abs " style="left:52px;top:7px;"><svg width="16" height="12" viewBox="0 0 16 12"><path d="M2 3 L8 9 L14 3" fill="none" stroke="#000" stroke-width="2.2"/></svg></div></div><div class="psep" style="left:98px"></div><div class="psep" style="left:193px"></div><div class="psep" style="left:361px"></div><div class="psep" style="left:456px"></div><div class="abs " style="left:117px;top:17px;"><svg width="14" height="18" viewBox="0 0 14 18"><rect x="1" y="1" width="3" height="16" fill="#8cc5f5"/><path d="M13 1 L5 9 L13 17 Z" fill="#8cc5f5"/></svg></div><div class="abs " style="left:163px;top:17px;"><svg width="12" height="18" viewBox="0 0 12 18"><path d="M11 1 L2 9 L11 17 Z" fill="#8cc5f5"/></svg></div><div class="abs" style="left:204px;top:13px;line-height:26px">第</div><div class="abs f" style="left:229px;top:10px;width:63px;height:32px;border:1px solid #95b8e7;background:#cce8cf;text-align:center;line-height:29px">1</div><div class="abs" style="left:295px;top:13px;line-height:26px;white-space:nowrap">共<span class="n" style="margin-right:1px">1</span>页</div><div class="abs " style="left:381px;top:17px;"><svg width="12" height="18" viewBox="0 0 12 18"><path d="M1 1 L10 9 L1 17 Z" fill="#8cc5f5"/></svg></div><div class="abs " style="left:425px;top:17px;"><svg width="14" height="18" viewBox="0 0 14 18"><rect x="10" y="1" width="3" height="16" fill="#8cc5f5"/><path d="M1 1 L9 9 L1 17 Z" fill="#8cc5f5"/></svg></div><div class="abs " style="left:473px;top:15px;"><svg width="18" height="20" viewBox="0 0 18 20"><path d="M9 5 A6.5 6.5 0 1 0 15.5 11.5" fill="none" stroke="#4da0ea" stroke-width="2.6"/><path d="M8 0.5 L13 5 L8 9.5 Z" fill="#4da0ea"/></svg></div></div>
<div class="abs" style="left:280px;top:916px;width:1718px;height:1px;background:#95b8e7"></div>
<div class="abs" style="left:279px;top:917px;width:1719px;height:19px;background:#fff"></div>
<div class="abs" style="left:278px;top:936px;width:1720px;height:10px;background:#e6eef8;border-top:1px solid #95b8e7;border-bottom:2px solid #95b8e7"></div>
<div class="abs" style="left:280px;top:946px;width:1718px;height:43px;background:#fff"></div>
<div class="t2" style="left:280px"><span style="left:7px">收款单</span></div>
<div class="t2" style="left:405px"><span style="left:7px">应收记账</span></div>
<div class="t2" style="left:529px"><span style="left:7px">销售退货单</span></div>
<div class="abs" style="left:654px;top:947px;width:120px;height:42px;border:3px solid #3d9bf5;border-bottom:none;background:#fff;font-weight:bold;color:#0000ff;font-size:21px"><span class="abs" style="left:7px;top:14px;line-height:26px;white-space:nowrap">销售出库单</span></div>
<div class="abs" style="left:280px;top:989px;width:1718px;height:1px;background:#95b8e7"></div>
<div class="abs" style="left:280px;top:990px;width:1718px;height:49px;background:#f4f4f4;border-bottom:1px solid #ddd"><div class="abs " style="left:16px;top:13px;"><svg width="24" height="24" viewBox="0 0 24 24"><circle cx="12" cy="12" r="10.6" fill="#a9d8a0" stroke="#b8dcb0" stroke-width="1"/><circle cx="12" cy="12" r="8" fill="#5cb84e"/><path d="M12 7.8 V16.2 M7.8 12 H16.2" stroke="#fff" stroke-width="2.8"/></svg></div><div class="tb" style="left:45px;top:12px">增加</div><div class="abs " style="left:113px;top:13px;"><svg width="26" height="24" viewBox="0 0 26 24"><rect x="1.5" y="6.5" width="23" height="11" rx="2" fill="#e9f6e4" stroke="#5aa84a" stroke-width="1.4"/><rect x="4" y="9" width="18" height="6" fill="#1f8a1f"/></svg></div><div class="tb" style="left:142px;top:12px">删除</div><div class="abs " style="left:210px;top:13px;"><svg width="26" height="26" viewBox="0 0 26 26"><rect x="1.5" y="2.5" width="22" height="18" rx="1.5" fill="#fdfdfd" stroke="#9fb3cf" stroke-width="1.4"/><rect x="2" y="3" width="21" height="4" fill="#86aee6"/><path d="M7.5 24 L9.5 18 L19.5 7 L25 12 L15 22.5 Z" fill="#f6b436" stroke="#c98318" stroke-width=".9"/><path d="M11.5 20.5 L21.5 9.5" stroke="#fbd878" stroke-width="2"/><path d="M7.5 24 L9.5 18 L15 22.5 Z" fill="#f3dbb0"/><path d="M7.5 24 l.9 -2.6 l1.8 1.7 z" fill="#444"/><path d="M18 8.7 L23.5 13.6 L25 12 L19.5 7 Z" fill="#e79b9b"/></svg></div><div class="tb" style="left:240px;top:12px">设计</div><div class="abs " style="left:308px;top:13px;"><svg width="26" height="26" viewBox="0 0 26 26"><rect x="1.5" y="1.5" width="20" height="18" fill="#fff" stroke="#9fb8dc" stroke-width="1.3"/><rect x="2" y="2" width="19" height="4" fill="#a8c6ee"/><path d="M2 10 h19 M2 14 h19 M8 6 v13" stroke="#c9d8ec" stroke-width="1"/><rect x="3.5" y="7.5" width="3" height="2" fill="#8ccf70"/><rect x="3.5" y="11.5" width="3" height="2" fill="#8ccf70"/><g transform="translate(17 18)"><g fill="#e2e4e8" stroke="#a9adb5" stroke-width=".8"><rect x="-2" y="-8" width="4" height="5" transform="rotate(0)"/><rect x="-2" y="-8" width="4" height="5" transform="rotate(60)"/><rect x="-2" y="-8" width="4" height="5" transform="rotate(120)"/><rect x="-2" y="-8" width="4" height="5" transform="rotate(180)"/><rect x="-2" y="-8" width="4" height="5" transform="rotate(240)"/><rect x="-2" y="-8" width="4" height="5" transform="rotate(300)"/><circle r="5.5"/></g><circle r="3.5" fill="#e2e4e8"/></g></svg></div><div class="tb" style="left:338px;top:12px">排序设置</div><div class="abs " style="left:448px;top:13px;"><svg width="26" height="26" viewBox="0 0 26 26"><path d="M3 23 L14 11" stroke="#5c96e0" stroke-width="5.5" stroke-linecap="round"/><path d="M14 12 C11 8 14 2 20 2.5 L16.5 6.5 L19.5 9.5 L23.5 6 C24.5 11 19 15 14 12 Z" fill="#b9bfc9" stroke="#8e96a4" stroke-width=".9"/></svg></div><div class="tb" style="left:478px;top:12px">列设置</div><div class="psep" style="left:99px;top:6px"></div><div class="psep" style="left:197px;top:6px"></div><div class="psep" style="left:295px;top:6px"></div><div class="psep" style="left:435px;top:6px"></div></div>
<div class="abs hfill" style="left:280px;top:1039px;width:1718px;height:48px"></div>
<table class="g" style="left:281px;top:1039px;width:1772px"><colgroup><col style="width:45px"><col style="width:42px"><col style="width:119px"><col style="width:49px"><col style="width:166px"><col style="width:100px"><col style="width:100px"><col style="width:100px"><col style="width:120px"><col style="width:100px"><col style="width:100px"><col style="width:131px"><col style="width:100px"><col style="width:100px"><col style="width:100px"><col style="width:100px"><col style="width:100px"><col style="width:100px"></colgroup><tr class="h"><td class=rn></td><td class=c><span class="ck"></span></td><td>操作</td><td class=l0><span class="n" style="margin-right:2px">ID</span><span class="srt"><svg width="12" height="16" viewBox="0 0 12 16"><path d="M6 0 L12 7 H0 Z M6 16 L12 9 H0 Z" fill="#c2c2c2"/></svg></span></td><td>订单编号<span class="srt"><svg width="12" height="16" viewBox="0 0 12 16"><path d="M6 0 L12 7 H0 Z M6 16 L12 9 H0 Z" fill="#c2c2c2"/></svg></span></td><td>客户<span class="srt"><svg width="12" height="16" viewBox="0 0 12 16"><path d="M6 0 L12 7 H0 Z M6 16 L12 9 H0 Z" fill="#c2c2c2"/></svg></span></td><td class=p0>收款帐户</td><td class=p0>收款方式</td><td>出货仓</td><td class=p0>应收金额</td><td class=p0>优惠金额</td><td class=p0>本次收款金额</td><td class=p0>交货日期</td><td>联系人<span class="srt"><svg width="12" height="16" viewBox="0 0 12 16"><path d="M6 0 L12 7 H0 Z M6 16 L12 9 H0 Z" fill="#c2c2c2"/></svg></span></td><td class=p0>联系电话</td><td>经手人</td><td class=p0>交货地址</td><td class=p0 l>发货状态</td></tr><tr><td class=rn><span class="n">1</span></td><td class=c><span class="ck"></span></td><td class=c><span class="ops"><svg width="30" height="30" viewBox="0 0 30 30"><rect width="30" height="30" fill="#f4f4f4"/><rect x="4.1" y="7.3" width="18.6" height="18.4" rx="1.2" fill="#fafafa" stroke="#6d93b5" stroke-width="2"/><g transform="translate(6.2 24.4) rotate(-43.5)"><path d="M0 0 L5 -3.5 L5 3.5 Z" fill="#f4f8fb" stroke="#5a8ab2" stroke-width="1.5" stroke-linejoin="round"/><rect x="5" y="-3.5" width="14.5" height="7" fill="#6fd0f6" stroke="#5a8ab2" stroke-width="1.5"/><path d="M8 0 H17" stroke="#4c86b4" stroke-width="1.3"/><rect x="19.5" y="-3.5" width="4.6" height="7" rx="2.2" fill="#fff" stroke="#5a8ab2" stroke-width="1.5"/></g><path d="M7 24.2 H19.5" stroke="#5a8ab2" stroke-width="1.3"/></svg><i></i><svg width="30" height="30" viewBox="0 0 30 30"><rect width="30" height="30" fill="#f5f5f5"/><path d="M9.2 3.8 V1.4 H17.2 V3.8" fill="none" stroke="#c03a4a" stroke-width="2"/><rect x="2.8" y="6.4" width="20.6" height="4.4" rx=".8" fill="#f5a9a9" stroke="#c03a4a" stroke-width="1.7"/><path d="M4.6 11.2 L6.2 27.4 H16" fill="none" stroke="#c03a4a" stroke-width="1.9" stroke-linejoin="round"/><path d="M22 11.2 L21.6 16.5" stroke="#c03a4a" stroke-width="1.9"/><path d="M8.6 14.6 L9.2 24.2 M12.8 14.6 V24.2" stroke="#c03a4a" stroke-width="1.8"/><path d="M18 14.6 V18 M21.2 14.6 V17" stroke="#c03a4a" stroke-width="1.6"/><circle cx="21.2" cy="23.4" r="5.6" fill="#f7f1f1" stroke="#c03a4a" stroke-width="1.8"/><path d="M19 21.2 L23.4 25.6 M23.4 21.2 L19 25.6" stroke="#c03a4a" stroke-width="1.7"/></svg></span></td><td><span class="n">13</span></td><td><span class="n a">XSC000004</span></td><td>北京百度</td><td></td><td></td><td>成品仓库</td><td><span class="n">20000.00</span></td><td><span class="n">0.00</span></td><td><span class="n">0.00</span></td><td></td><td></td><td></td><td><span class="n d">Admin</span></td><td>北京市海淀区</td><td class=c></td></tr><tr><td class=rn><span class="n">2</span></td><td class=c><span class="ck"></span></td><td class=c><span class="ops"><svg width="30" height="30" viewBox="0 0 30 30"><rect width="30" height="30" fill="#f4f4f4"/><rect x="4.1" y="7.3" width="18.6" height="18.4" rx="1.2" fill="#fafafa" stroke="#6d93b5" stroke-width="2"/><g transform="translate(6.2 24.4) rotate(-43.5)"><path d="M0 0 L5 -3.5 L5 3.5 Z" fill="#f4f8fb" stroke="#5a8ab2" stroke-width="1.5" stroke-linejoin="round"/><rect x="5" y="-3.5" width="14.5" height="7" fill="#6fd0f6" stroke="#5a8ab2" stroke-width="1.5"/><path d="M8 0 H17" stroke="#4c86b4" stroke-width="1.3"/><rect x="19.5" y="-3.5" width="4.6" height="7" rx="2.2" fill="#fff" stroke="#5a8ab2" stroke-width="1.5"/></g><path d="M7 24.2 H19.5" stroke="#5a8ab2" stroke-width="1.3"/></svg><i></i><svg width="30" height="30" viewBox="0 0 30 30"><rect width="30" height="30" fill="#f5f5f5"/><path d="M9.2 3.8 V1.4 H17.2 V3.8" fill="none" stroke="#c03a4a" stroke-width="2"/><rect x="2.8" y="6.4" width="20.6" height="4.4" rx=".8" fill="#f5a9a9" stroke="#c03a4a" stroke-width="1.7"/><path d="M4.6 11.2 L6.2 27.4 H16" fill="none" stroke="#c03a4a" stroke-width="1.9" stroke-linejoin="round"/><path d="M22 11.2 L21.6 16.5" stroke="#c03a4a" stroke-width="1.9"/><path d="M8.6 14.6 L9.2 24.2 M12.8 14.6 V24.2" stroke="#c03a4a" stroke-width="1.8"/><path d="M18 14.6 V18 M21.2 14.6 V17" stroke="#c03a4a" stroke-width="1.6"/><circle cx="21.2" cy="23.4" r="5.6" fill="#f7f1f1" stroke="#c03a4a" stroke-width="1.8"/><path d="M19 21.2 L23.4 25.6 M23.4 21.2 L19 25.6" stroke="#c03a4a" stroke-width="1.7"/></svg></span></td><td><span class="n">7</span></td><td><span class="n a">XSC000003</span></td><td>北京百度</td><td>现金</td><td></td><td>成品仓库</td><td><span class="n">100.68</span></td><td><span class="n">0.00</span></td><td><span class="n">0.00</span></td><td></td><td></td><td></td><td><span class="n d">Admin</span></td><td>北京市海淀区</td><td class=c></td></tr><tr><td class=rn><span class="n">3</span></td><td class=c><span class="ck"></span></td><td class=c><span class="ops"><svg width="30" height="30" viewBox="0 0 30 30"><rect width="30" height="30" fill="#f4f4f4"/><rect x="4.1" y="7.3" width="18.6" height="18.4" rx="1.2" fill="#fafafa" stroke="#6d93b5" stroke-width="2"/><g transform="translate(6.2 24.4) rotate(-43.5)"><path d="M0 0 L5 -3.5 L5 3.5 Z" fill="#f4f8fb" stroke="#5a8ab2" stroke-width="1.5" stroke-linejoin="round"/><rect x="5" y="-3.5" width="14.5" height="7" fill="#6fd0f6" stroke="#5a8ab2" stroke-width="1.5"/><path d="M8 0 H17" stroke="#4c86b4" stroke-width="1.3"/><rect x="19.5" y="-3.5" width="4.6" height="7" rx="2.2" fill="#fff" stroke="#5a8ab2" stroke-width="1.5"/></g><path d="M7 24.2 H19.5" stroke="#5a8ab2" stroke-width="1.3"/></svg><i></i><svg width="30" height="30" viewBox="0 0 30 30"><rect width="30" height="30" fill="#f5f5f5"/><path d="M9.2 3.8 V1.4 H17.2 V3.8" fill="none" stroke="#c03a4a" stroke-width="2"/><rect x="2.8" y="6.4" width="20.6" height="4.4" rx=".8" fill="#f5a9a9" stroke="#c03a4a" stroke-width="1.7"/><path d="M4.6 11.2 L6.2 27.4 H16" fill="none" stroke="#c03a4a" stroke-width="1.9" stroke-linejoin="round"/><path d="M22 11.2 L21.6 16.5" stroke="#c03a4a" stroke-width="1.9"/><path d="M8.6 14.6 L9.2 24.2 M12.8 14.6 V24.2" stroke="#c03a4a" stroke-width="1.8"/><path d="M18 14.6 V18 M21.2 14.6 V17" stroke="#c03a4a" stroke-width="1.6"/><circle cx="21.2" cy="23.4" r="5.6" fill="#f7f1f1" stroke="#c03a4a" stroke-width="1.8"/><path d="M19 21.2 L23.4 25.6 M23.4 21.2 L19 25.6" stroke="#c03a4a" stroke-width="1.7"/></svg></span></td><td><span class="n">6</span></td><td><span class="n a">XSC000002</span></td><td>北京百度</td><td></td><td></td><td>成品仓库</td><td><span class="n">2000.00</span></td><td><span class="n">0.00</span></td><td><span class="n">0.00</span></td><td></td><td></td><td></td><td><span class="n d">Admin</span></td><td>北京市海淀区</td><td class=c></td></tr><tr><td class=rn><span class="n">4</span></td><td class=c><span class="ck"></span></td><td class=c><span class="ops"><svg width="30" height="30" viewBox="0 0 30 30"><rect width="30" height="30" fill="#f4f4f4"/><rect x="4.1" y="7.3" width="18.6" height="18.4" rx="1.2" fill="#fafafa" stroke="#6d93b5" stroke-width="2"/><g transform="translate(6.2 24.4) rotate(-43.5)"><path d="M0 0 L5 -3.5 L5 3.5 Z" fill="#f4f8fb" stroke="#5a8ab2" stroke-width="1.5" stroke-linejoin="round"/><rect x="5" y="-3.5" width="14.5" height="7" fill="#6fd0f6" stroke="#5a8ab2" stroke-width="1.5"/><path d="M8 0 H17" stroke="#4c86b4" stroke-width="1.3"/><rect x="19.5" y="-3.5" width="4.6" height="7" rx="2.2" fill="#fff" stroke="#5a8ab2" stroke-width="1.5"/></g><path d="M7 24.2 H19.5" stroke="#5a8ab2" stroke-width="1.3"/></svg><i></i><svg width="30" height="30" viewBox="0 0 30 30"><rect width="30" height="30" fill="#f5f5f5"/><path d="M9.2 3.8 V1.4 H17.2 V3.8" fill="none" stroke="#c03a4a" stroke-width="2"/><rect x="2.8" y="6.4" width="20.6" height="4.4" rx=".8" fill="#f5a9a9" stroke="#c03a4a" stroke-width="1.7"/><path d="M4.6 11.2 L6.2 27.4 H16" fill="none" stroke="#c03a4a" stroke-width="1.9" stroke-linejoin="round"/><path d="M22 11.2 L21.6 16.5" stroke="#c03a4a" stroke-width="1.9"/><path d="M8.6 14.6 L9.2 24.2 M12.8 14.6 V24.2" stroke="#c03a4a" stroke-width="1.8"/><path d="M18 14.6 V18 M21.2 14.6 V17" stroke="#c03a4a" stroke-width="1.6"/><circle cx="21.2" cy="23.4" r="5.6" fill="#f7f1f1" stroke="#c03a4a" stroke-width="1.8"/><path d="M19 21.2 L23.4 25.6 M23.4 21.2 L19 25.6" stroke="#c03a4a" stroke-width="1.7"/></svg></span></td><td><span class="n">5</span></td><td><span class="n a">XSC000001</span></td><td>北京百度</td><td>现金</td><td></td><td>成品仓库</td><td><span class="n">150.00</span></td><td><span class="n">0.00</span></td><td><span class="n">0.00</span></td><td></td><td></td><td></td><td><span class="n d">Admin</span></td><td>北京市海淀区</td><td class=c>已发货</td></tr></table>
<div id="lbar2" class="abs"></div>
</div>
</body>
</html>
